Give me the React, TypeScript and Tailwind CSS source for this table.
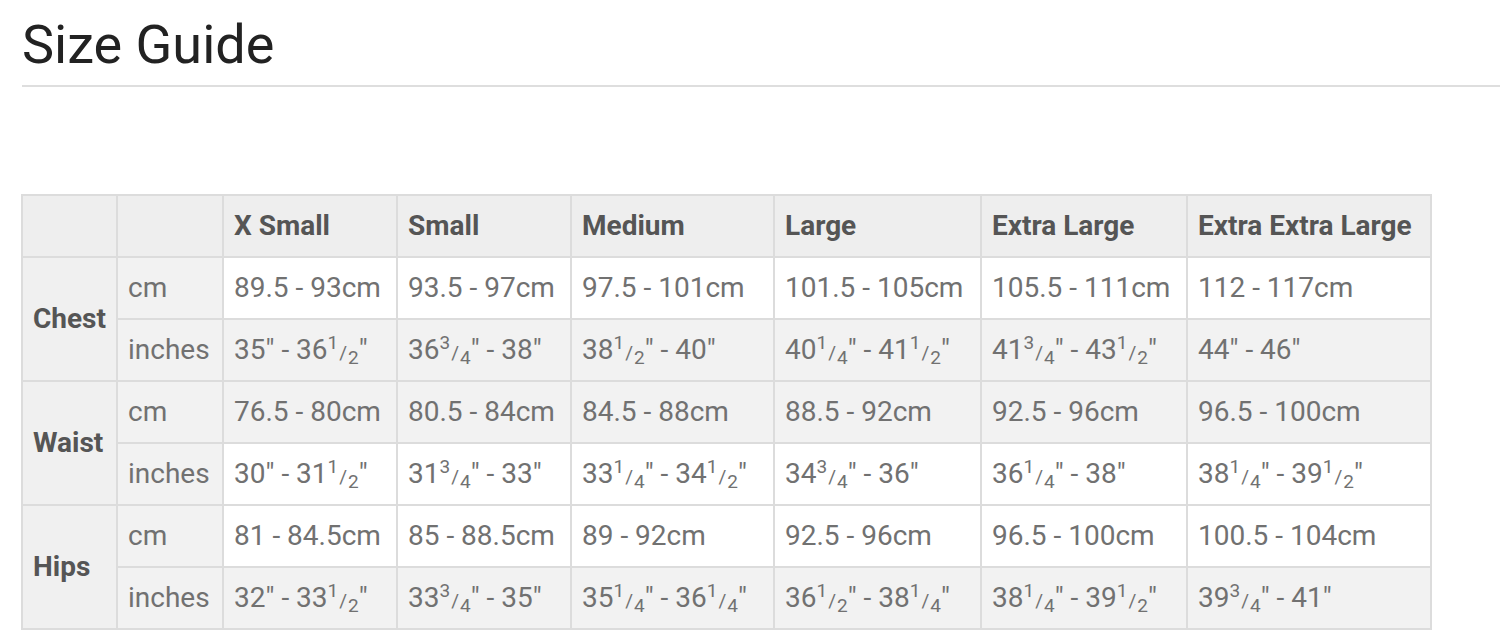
import React from "react"

const sizes = ["X Small", "Small", "Medium", "Large", "Extra Large", "Extra Extra Large"]

const groups = [
    {
        name: "Chest",
        rows: [
            { unit: "cm", grey: false, values: ["89.5 - 93cm", "93.5 - 97cm", "97.5 - 101cm", "101.5 - 105cm", "105.5 - 111cm", "112 - 117cm"] },
            { unit: "inches", grey: true, values: ['35" - 36{1/2}"', '36{3/4}" - 38"', '38{1/2}" - 40"', '40{1/4}" - 41{1/2}"', '41{3/4}" - 43{1/2}"', '44" - 46"'] },
        ],
    },
    {
        name: "Waist",
        rows: [
            { unit: "cm", grey: true, values: ["76.5 - 80cm", "80.5 - 84cm", "84.5 - 88cm", "88.5 - 92cm", "92.5 - 96cm", "96.5 - 100cm"] },
            { unit: "inches", grey: false, values: ['30" - 31{1/2}"', '31{3/4}" - 33"', '33{1/4}" - 34{1/2}"', '34{3/4}" - 36"', '36{1/4}" - 38"', '38{1/4}" - 39{1/2}"'] },
        ],
    },
    {
        name: "Hips",
        rows: [
            { unit: "cm", grey: false, values: ["81 - 84.5cm", "85 - 88.5cm", "89 - 92cm", "92.5 - 96cm", "96.5 - 100cm", "100.5 - 104cm"] },
            { unit: "inches", grey: true, values: ['32" - 33{1/2}"', '33{3/4}" - 35"', '35{1/4}" - 36{1/4}"', '36{1/2}" - 38{1/4}"', '38{1/4}" - 39{1/2}"', '39{3/4}" - 41"'] },
        ],
    },
]

const colWidths = ["w-[95px]", "w-[106px]", "w-[174px]", "w-[174px]", "w-[203px]", "w-[207px]", "w-[206px]", "w-[244px]"]

// turns 36{1/2}" into 36 with a small raised/lowered fraction
function Measure({ text }: { text: string }) {
    const parts = text.split(/(\{\d\/\d\})/)
    return (
        <>
            {parts.map((p, i) => {
                const m = p.match(/^\{(\d)\/(\d)\}$/)
                if (!m) return <span key={i}>{p}</span>
                return (
                    <span key={i} className="whitespace-nowrap text-[19px]">
                        <span className="relative -top-[10px]">{m[1]}</span>
                        <span className="px-px">/</span>
                        <span className="relative top-[5px]">{m[2]}</span>
                    </span>
                )
            })}
        </>
    )
}

export default function App() {
    const cell = "border-2 border-[#dcdcdc] px-[10px] h-[62px] whitespace-nowrap"

    return (
        <main className="min-h-screen bg-white font-['Roboto',sans-serif]">
            <div className="px-[22px] pt-[14px]">
                <h1 className="border-b-2 border-[#dedede] pb-[10px] text-[54px] leading-[61px] font-normal text-[#222] -mr-[22px]">
                    Size Guide
                </h1>

                <table className="mt-[107px] border-collapse border-2 border-[#dcdcdc] text-[28px] text-[#717171] -ml-px">
                    <colgroup>
                        {colWidths.map((w, i) => (
                            <col key={i} className={w} />
                        ))}
                    </colgroup>
                    <thead>
                        <tr className="bg-[#eeeeee] text-left font-bold text-[#555]">
                            <th className={cell}></th>
                            <th className={cell}></th>
                            {sizes.map((s) => (
                                <th key={s} className={`${cell} font-bold`}>
                                    {s}
                                </th>
                            ))}
                        </tr>
                    </thead>
                    <tbody>
                        {groups.map((g) =>
                            g.rows.map((r, ri) => (
                                <tr key={g.name + r.unit} className={r.grey ? "bg-[#f2f2f2]" : "bg-white"}>
                                    {ri === 0 && (
                                        <th rowSpan={2} className={`${cell} bg-[#f0f0f0] text-left font-bold text-[#555]`}>
                                            {g.name}
                                        </th>
                                    )}
                                    <td className={`${cell} bg-[#f2f2f2]`}>{r.unit}</td>
                                    {r.values.map((v, vi) => (
                                        <td key={vi} className={cell}>
                                            <Measure text={v} />
                                        </td>
                                    ))}
                                </tr>
                            ))
                        )}
                    </tbody>
                </table>
            </div>
        </main>
    )
}
